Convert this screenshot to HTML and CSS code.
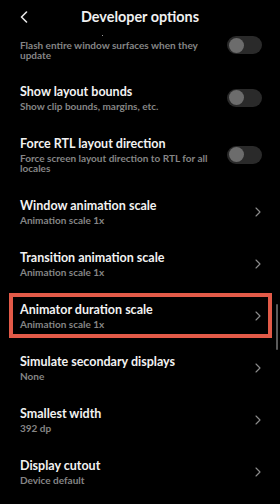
FILE: index.html
```html
<!DOCTYPE html>
<html lang="en">
<head>
    <meta charset="UTF-8">
    <meta name="viewport" content="width=device-width, initial-scale=1.0">
    <title>Developer options</title>
    <link rel="stylesheet" href="styles.css">
</head>
<body>
    <div class="screen">
        <div class="header">
            <svg class="back" width="8" height="12" viewBox="0 0 8 12">
                <path d="M6.5 1 L1.5 6 L6.5 11" fill="none" stroke="#e8e8e8" stroke-width="1.6" stroke-linecap="round" stroke-linejoin="round"/>
            </svg>
            <div class="title">Developer options</div>
            <span class="speck"></span>
        </div>

        <div class="list">
            <div class="row row-partial">
                <div class="text">
                    <div class="sub">Flash entire window surfaces when they update</div>
                </div>
                <div class="toggle toggle-raised"><span class="knob"></span></div>
            </div>

            <div class="row">
                <div class="text">
                    <div class="name">Show layout bounds</div>
                    <div class="sub">Show clip bounds, margins, etc.</div>
                </div>
                <div class="toggle"><span class="knob"></span></div>
            </div>

            <div class="row">
                <div class="text">
                    <div class="name">Force RTL layout direction</div>
                    <div class="sub">Force screen layout direction to RTL for all locales</div>
                </div>
                <div class="toggle"><span class="knob"></span></div>
            </div>

            <div class="row">
                <div class="text">
                    <div class="name">Window animation scale</div>
                    <div class="sub">Animation scale 1x</div>
                </div>
                <svg class="chev" width="6" height="10" viewBox="0 0 6 10"><path d="M1 1 L5 5 L1 9" fill="none" stroke="#8c8c8c" stroke-width="1.1" stroke-linecap="round" stroke-linejoin="round"/></svg>
            </div>

            <div class="row">
                <div class="text">
                    <div class="name">Transition animation scale</div>
                    <div class="sub">Animation scale 1x</div>
                </div>
                <svg class="chev" width="6" height="10" viewBox="0 0 6 10"><path d="M1 1 L5 5 L1 9" fill="none" stroke="#8c8c8c" stroke-width="1.1" stroke-linecap="round" stroke-linejoin="round"/></svg>
            </div>

            <div class="row marked">
                <div class="text">
                    <div class="name">Animator duration scale</div>
                    <div class="sub">Animation scale 1x</div>
                </div>
                <svg class="chev" width="6" height="10" viewBox="0 0 6 10"><path d="M1 1 L5 5 L1 9" fill="none" stroke="#8c8c8c" stroke-width="1.1" stroke-linecap="round" stroke-linejoin="round"/></svg>
                <span class="highlight-box"></span>
                <span class="scrollbar"></span>
            </div>

            <div class="row">
                <div class="text">
                    <div class="name">Simulate secondary displays</div>
                    <div class="sub">None</div>
                </div>
                <svg class="chev" width="6" height="10" viewBox="0 0 6 10"><path d="M1 1 L5 5 L1 9" fill="none" stroke="#8c8c8c" stroke-width="1.1" stroke-linecap="round" stroke-linejoin="round"/></svg>
            </div>

            <div class="row">
                <div class="text">
                    <div class="name">Smallest width</div>
                    <div class="sub">392 dp</div>
                </div>
                <svg class="chev" width="6" height="10" viewBox="0 0 6 10"><path d="M1 1 L5 5 L1 9" fill="none" stroke="#8c8c8c" stroke-width="1.1" stroke-linecap="round" stroke-linejoin="round"/></svg>
            </div>

            <div class="row">
                <div class="text">
                    <div class="name">Display cutout</div>
                    <div class="sub">Device default</div>
                </div>
                <svg class="chev" width="6" height="10" viewBox="0 0 6 10"><path d="M1 1 L5 5 L1 9" fill="none" stroke="#8c8c8c" stroke-width="1.1" stroke-linecap="round" stroke-linejoin="round"/></svg>
            </div>
        </div>
    </div>
</body>
</html>
```

FILE: styles.css
```css
* {
    margin: 0;
    padding: 0;
    box-sizing: border-box;
}

body {
    font-family: Lato, 'Noto Sans', sans-serif;
    background: #000;
    color: #f0f0f0;
    width: 280px;
    height: 504px;
    overflow: hidden;
}

.screen {
    position: relative;
    height: 504px;
}

/* top bar */
.header {
    position: relative;
    height: 40px;
    padding-top: 7px;
}

.back {
    position: absolute;
    left: 20px;
    top: 11px;
}

.title {
    text-align: center;
    font-size: 14.4px;
    font-weight: 700;
    line-height: 20px;
}

.speck {
    position: absolute;
    left: 102px;
    top: 35px;
    width: 1px;
    height: 1px;
    background: #9a9a9a;
}

/* settings rows */
.row {
    position: relative;
    display: flex;
    align-items: center;
    padding: 12px 18px 13px 20px;
}

.row-partial {
    padding-top: 0;
    padding-bottom: 12px;
    align-items: flex-start;
}

.text {
    flex: 1;
    padding-right: 12px;
}

.name {
    font-size: 12.5px;
    font-weight: 700;
    line-height: 15px;
    color: #f2f2f2;
}

.sub {
    margin-top: 2px;
    font-size: 10px;
    font-weight: 700;
    line-height: 10px;
    color: #858585;
}

.row-partial .sub {
    margin-top: 0;
}

.toggle {
    width: 35px;
    height: 18px;
    border-radius: 9px;
    background: #2a2a2a;
    padding: 1.5px 2px;
    flex-shrink: 0;
}

.toggle-raised {
    margin-top: -4px;
}

.knob {
    display: block;
    width: 15px;
    height: 15px;
    border-radius: 50%;
    background: #6c6c6c;
}

.chev {
    flex-shrink: 0;
    margin-right: 1px;
}

/* annotation over the selected row */
.highlight-box {
    position: absolute;
    left: 9px;
    right: 8px;
    top: 3px;
    bottom: 4px;
    border: 4px solid #e25a48;
}

.scrollbar {
    position: absolute;
    right: 2px;
    top: 14px;
    width: 2px;
    height: 46px;
    border-radius: 1px;
    background: #5a5a5a;
}
```
